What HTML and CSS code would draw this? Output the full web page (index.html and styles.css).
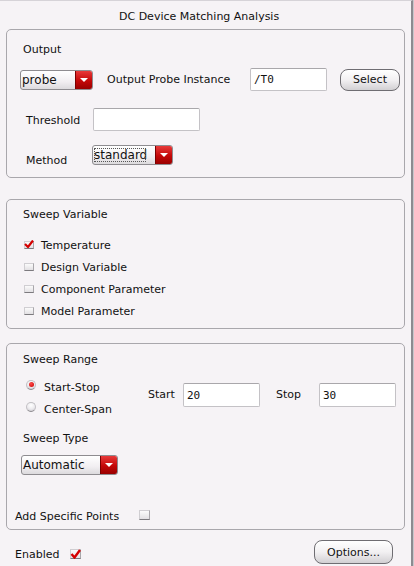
FILE: index.html
```html
<!DOCTYPE html>
<html>
<head>
<meta charset="utf-8">
<link rel="stylesheet" href="styles.css">
</head>
<body>
<div class="dialog">
  <div class="title">DC Device Matching Analysis</div>

  <div class="group g-output">
    <div class="gtitle">Output</div>
    <div class="row r-probe">
      <div class="combo c-probe"><span class="ctext">probe</span><span class="carrow"></span></div>
      <span class="lbl l-inst">Output Probe Instance</span>
      <div class="field f-inst">/T0</div>
      <button class="btn b-select">Select</button>
    </div>
    <div class="row r-thresh">
      <span class="lbl l-thresh">Threshold</span>
      <div class="field f-thresh"></div>
    </div>
    <div class="row r-method">
      <span class="lbl l-method">Method</span>
      <div class="combo c-method"><span class="ctext focus">standard</span><span class="carrow"></span></div>
    </div>
  </div>

  <div class="group g-var">
    <div class="gtitle">Sweep Variable</div>
    <div class="vlist">
      <div class="crow"><span class="cb checked"><svg width="10" height="8" viewBox="0 0 10 8"><path d="M1 4 L4 7 L9 0.5" fill="none" stroke="#d40000" stroke-width="2.2"/></svg></span><span class="lbl">Temperature</span></div>
      <div class="crow"><span class="cb"></span><span class="lbl">Design Variable</span></div>
      <div class="crow"><span class="cb"></span><span class="lbl">Component Parameter</span></div>
      <div class="crow"><span class="cb"></span><span class="lbl">Model Parameter</span></div>
    </div>
  </div>

  <div class="group g-range">
    <div class="gtitle">Sweep Range</div>
    <div class="rangerow">
      <div class="radios">
        <div class="rrow"><span class="radio on"></span><span class="lbl">Start-Stop</span></div>
        <div class="rrow"><span class="radio"></span><span class="lbl">Center-Span</span></div>
      </div>
      <span class="lbl l-start">Start</span>
      <div class="field f-num">20</div>
      <span class="lbl l-stop">Stop</span>
      <div class="field f-num">30</div>
    </div>
    <div class="gtitle t-type">Sweep Type</div>
    <div class="combo c-auto"><span class="ctext">Automatic</span><span class="carrow"></span></div>
    <div class="row r-points">
      <span class="lbl l-points">Add Specific Points</span>
      <span class="cb big"></span>
    </div>
  </div>

  <div class="footer">
    <span class="lbl l-enabled">Enabled</span>
    <span class="cb big checked"><svg width="11" height="10" viewBox="0 0 11 10"><path d="M1.5 5 L4.5 8.5 L10 1" fill="none" stroke="#d40000" stroke-width="2.4"/></svg></span>
    <span class="spacer"></span>
    <button class="btn b-options">Options...</button>
  </div>
</div>
</body>
</html>
```
FILE: styles.css
```css
html, body {
  margin: 0;
  padding: 0;
  background: #c8c6cb;
}
body {
  width: 414px;
  height: 566px;
  overflow: hidden;
  font-family: "DejaVu Sans", sans-serif;
  font-size: 11px;
  line-height: 13px;
  color: #111;
}
.dialog {
  width: 413px;
  height: 566px;
  box-sizing: border-box;
  background: #f6f3f6;
  border-top: 1px solid #d6d3d8;
  border-right: 2px solid #8d8b90;
}
.title {
  padding-top: 9px;
  padding-left: 119px;
  height: 19px;
}
.group {
  margin-left: 6px;
  width: 399px;
  box-sizing: border-box;
  border: 1px solid #a9a7ac;
  border-radius: 5px;
}
.gtitle {
  padding-left: 16px;
}
.row {
  display: flex;
}
.lbl {
  white-space: nowrap;
}

/* Output group */
.g-output {
  padding-top: 13px;
  height: 149px;
}
.r-probe {
  margin-top: 12px;
  height: 23px;
  align-items: center;
  padding-left: 13px;
}
.c-probe { width: 73px; }
.l-inst { margin-left: 14px; width: 143px; }
.f-inst { width: 77px; height: 23px; }
.b-select { margin-left: 13px; width: 60px; height: 22px; }

.r-thresh {
  margin-top: 17px;
  height: 23px;
  align-items: center;
  padding-left: 19px;
}
.l-thresh { width: 67px; margin-top: 2px; }
.f-thresh { width: 107px; height: 23px; }

.r-method {
  margin-top: 14px;
  padding-left: 19px;
  align-items: flex-start;
}
.l-method { width: 66px; margin-top: 9px; }
.c-method { width: 81px; }

/* fields */
.field {
  box-sizing: border-box;
  background: #fff;
  border: 1px solid #c4c2c6;
  border-top-color: #a9a7ab;
  border-radius: 2px;
  font-family: "DejaVu Sans Mono", monospace;
  font-size: 11px;
  padding-left: 3px;
  display: flex;
  align-items: center;
}

/* combos */
.combo {
  display: flex;
  height: 20px;
  box-sizing: border-box;
  border: 1px solid #8e8c90;
  border-radius: 3px;
  background: linear-gradient(#ffffff, #f1eef1 60%, #dcdadd);
  overflow: hidden;
}
.ctext {
  flex: 1;
  padding-left: 1px;
  line-height: 18px;
  font-size: 12px;
}
.ctext.focus {
  outline: 1px dotted #555;
  outline-offset: -2px;
  margin: 1px 8px 1px 0;
  line-height: 17px;
}
.carrow {
  width: 16px;
  background: linear-gradient(#e83a3a, #c40808 55%, #9a0000);
  border-left: 1px solid #7a0000;
  position: relative;
}
.carrow::after {
  content: "";
  position: absolute;
  left: 4px;
  top: 7px;
  border-left: 4px solid transparent;
  border-right: 4px solid transparent;
  border-top: 4px solid #fff;
}

/* buttons */
.btn {
  box-sizing: border-box;
  font-family: "DejaVu Sans", sans-serif;
  font-size: 11px;
  color: #111;
  border: 1px solid #6f6d72;
  border-radius: 8px;
  background: linear-gradient(#ffffff, #f2f0f2 50%, #d2d0d3);
  padding: 0;
}

/* Sweep Variable */
.g-var {
  margin-top: 21px;
  padding-top: 8px;
  height: 130px;
}
.vlist {
  margin-top: 13px;
  padding-left: 17px;
}
.crow {
  display: flex;
  align-items: center;
  height: 22px;
}
.crow .lbl { margin-left: 7px; }
.cb {
  display: inline-block;
  width: 10px;
  height: 8px;
  box-sizing: border-box;
  background: linear-gradient(#fbfbfb, #e2e0e3);
  border: 1px solid #d0ced2;
  border-bottom: 1px solid #7c7a7e;
  border-right-color: #a9a7ab;
  position: relative;
  flex: none;
}
.cb svg {
  position: absolute;
  left: -1px;
  top: -2px;
}
.cb.big {
  width: 11px;
  height: 10px;
}
.cb.big svg { top: -1px; left: -1px; }

/* Sweep Range */
.g-range {
  margin-top: 14px;
  padding-top: 9px;
  height: 187px;
}
.rangerow {
  display: flex;
  align-items: flex-start;
  margin-top: 10px;
  padding-left: 19px;
}
.radios { width: 122px; }
.rrow {
  display: flex;
  align-items: center;
  height: 22px;
}
.rrow .lbl { margin-left: 8px; }
.radio {
  width: 10px;
  height: 10px;
  box-sizing: border-box;
  border-radius: 50%;
  border: 1px solid #c2c0c4;
  border-bottom-color: #8a888c;
  background: radial-gradient(circle at 50% 30%, #ffffff, #eceaee 55%, #bdbbc0);
  position: relative;
  margin-top: -4px;
}
.radio.on::after {
  content: "";
  position: absolute;
  left: 1.5px;
  top: 1px;
  width: 5px;
  height: 5px;
  border-radius: 50%;
  background: radial-gradient(circle at 40% 35%, #ff4a4a, #c80000);
}
.l-start { margin-top: 12px; width: 35px; }
.f-num { width: 77px; height: 24px; margin-top: 7px; }
.l-stop { margin-top: 12px; margin-left: 16px; width: 43px; }
.t-type { margin-top: 12px; }
.c-auto {
  margin-top: 10px;
  margin-left: 14px;
  width: 97px;
}
.r-points {
  margin-top: 35px;
  padding-left: 8px;
  align-items: flex-end;
}
.l-points { width: 124px; }
.r-points .cb { margin-bottom: 3px; }

/* footer */
.footer {
  display: flex;
  align-items: flex-start;
  margin-top: 10px;
  padding-left: 15px;
}
.l-enabled { margin-top: 8px; width: 55px; }
.footer .cb { margin-top: 9px; }
.spacer { flex: 1; }
.b-options {
  width: 79px;
  height: 24px;
  margin-right: 18px;
}
```
